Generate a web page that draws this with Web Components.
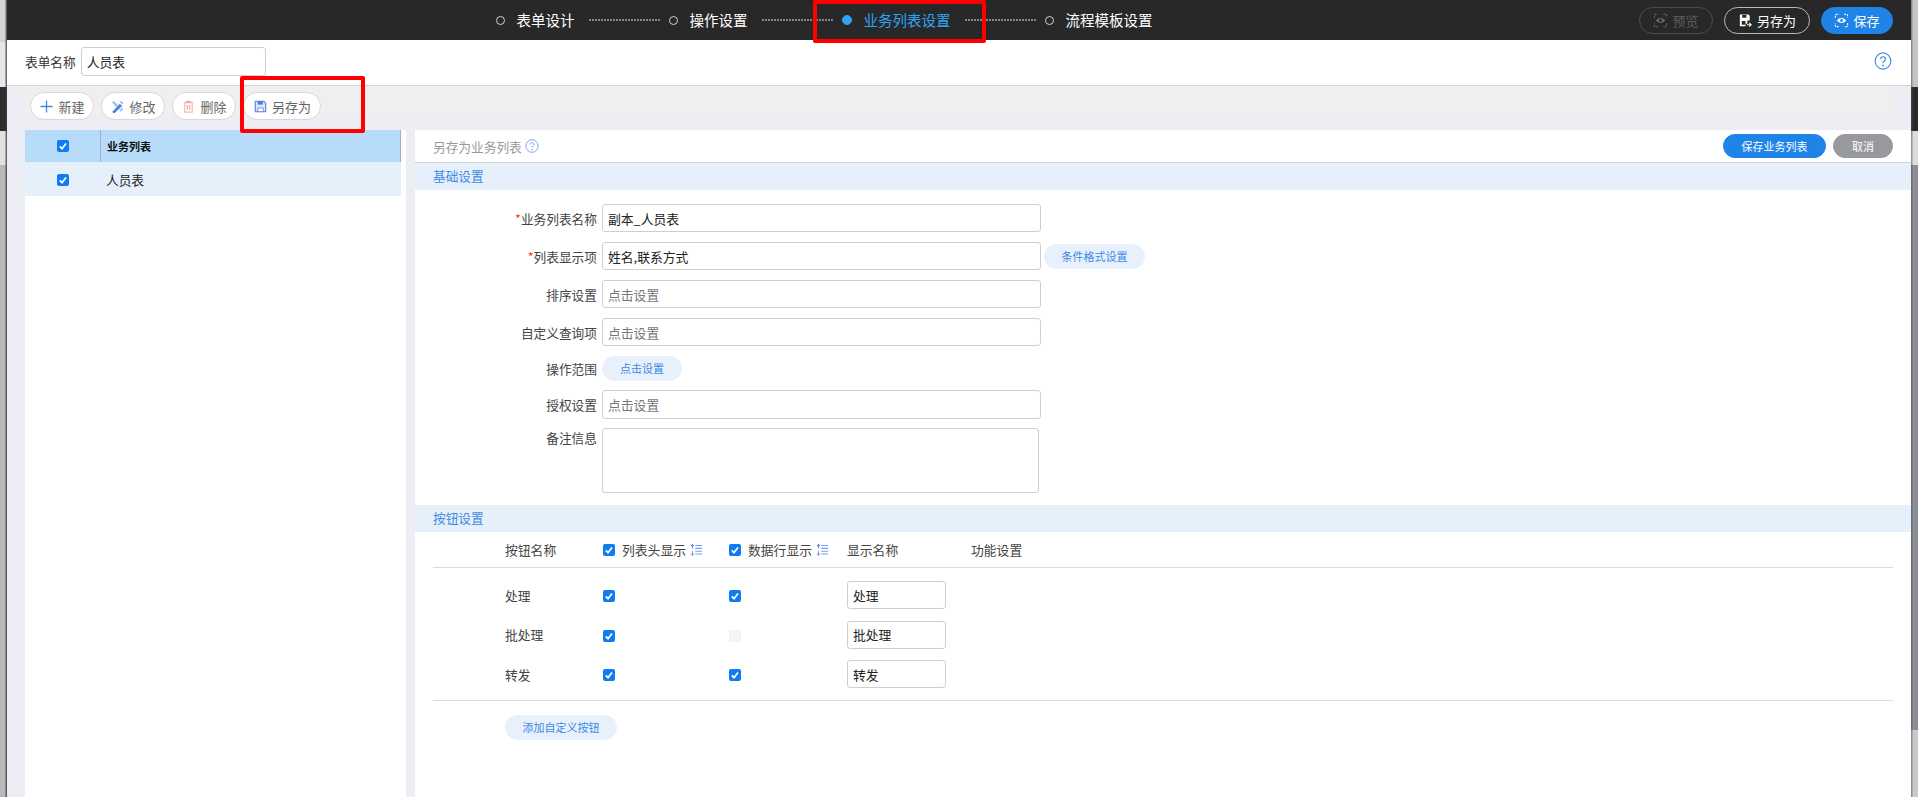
<!DOCTYPE html>
<html lang="zh">
<head>
<meta charset="utf-8">
<title>业务列表设置</title>
<style>
  html, body { margin: 0; height: 100%; overflow: hidden; }
  body { font: 13px "Noto Sans CJK SC", "Liberation Sans", sans-serif; color: #333; }
</style>
</head>
<body>
<app-shell>
  <top-bar></top-bar>
  <form-head></form-head>
  <tool-bar></tool-bar>
  <div slot="body-left"><list-panel></list-panel></div>
  <div slot="body-right"><detail-panel></detail-panel></div>
</app-shell>

<script>
const ICONS = {
  plus: `<path d="M8 1.5v13M1.5 8h13" stroke="#3b8ee8" stroke-width="1.4" fill="none"/>`,
  edit: `<path d="M3 13l7.5-8 2.5 2.5-8 7.5H3z" fill="#3f86e8"/><path d="M2 3.5l2-1.5 5 5-2 2z" fill="#a9bdf0"/><path d="M11.5 2l2.5 2.5-1 1L10.5 3z" fill="#7fa6ee"/><path d="M10 12l3-3 1.5 1.5-3 3z" fill="#a9bdf0"/>`,
  trash: `<path d="M3 4h10M6 4V2.5h4V4" stroke="#f3a0ac" stroke-width="1.2" fill="none"/><path d="M4 4.5v9.5h8V4.5" stroke="#f7b7a6" stroke-width="1.2" fill="none"/><path d="M6.7 6.5v5M9.3 6.5v5" stroke="#f3a0ac" stroke-width="1.2"/>`,
  save: `<path d="M2.5 2.5h9l2 2v9h-11z" stroke="#6f8fe8" stroke-width="1.4" fill="#dfe8fb"/><path d="M5 2.5h5.5v3.5H5z" fill="#3f7fe0"/><path d="M5 9.5h6v4H5z" fill="#fff" stroke="#6f8fe8"/>`,
  saveas: `<path d="M2 1.5h9l1.5 1.5v5H10v3.5H8V14H2z" fill="#fff"/><path d="M4.5 2h4.5v3H4.5z" fill="#282828"/><path d="M4 8.5h4v4H4z" fill="#282828"/><path d="M9.5 12.5h4.5M12 10.5l2 2-2 2" stroke="#fff" stroke-width="1.2" fill="none"/>`,
  eye: `<path d="M1.5 5V2.5a1 1 0 0 1 1-1H5M11 1.5h2.5a1 1 0 0 1 1 1V5M14.500 11v2.500a1 1 0 0 1-1 1H11M5 14.500H2.500a1 1 0 0 1-1-1V11" stroke="currentColor" stroke-width="1.200" fill="none" stroke-dasharray="2 1"/><path d="M3 8c2.500-3.500 7.500-3.500 10 0-2.500 3.500-7.500 3.500-10 0z" fill="currentColor"/><circle cx="8" cy="8" r="1.500" fill="var(--eye, #282828)"/>`,
  help: `<ellipse cx="8" cy="8" rx="7" ry="7.200" stroke="currentColor" fill="none"/><path d="M5.800 6.200C5.800 3.500 10.200 3.500 10.200 6.200c0 1.800-2.200 1.800-2.200 3.800" stroke="currentColor" fill="none"/><circle cx="8" cy="12" r=".8" fill="currentColor"/>`,
  sort: `<path d="M3 1v5M1.300 3L3 1l1.700 2" stroke="#3b82e8" stroke-width="1.200" fill="none"/><path d="M3 9.500v5M1.300 12.500L3 14.500l1.700-2" stroke="#7c7fd8" stroke-width="1.200" fill="none"/><path d="M6.500 2.500H15M6.500 6H15M6.500 9.500H15M6.500 13H15" stroke="#6fa4ee" stroke-width="1.300"/>`
};

class BaseElement extends HTMLElement {
  connectedCallback() {
    if (this.shadowRoot) return;
    this.attachShadow({ mode: "open" });
    this.shadowRoot.innerHTML = `<style>${this.constructor.styles}</style>${this.markup()}`;
  }
}

class UiIcon extends BaseElement {
  static get styles() {
    return /* css */`
      :host { display: inline-flex; flex: none; }
      svg { display: block; width: 100%; height: 100%; }
    `;
  }
  markup() {
    return /* html */`<svg viewBox="0 0 16 16">${ICONS[this.getAttribute("name")]}</svg>`;
  }
}

class AppShell extends BaseElement {
  static get styles() {
    return /* css */`
      :host { display: grid; grid-template-columns: 6.500px 1fr 7px; height: 100vh; position: relative; overflow: hidden; }
      .main { display: flex; flex-direction: column; min-width: 0; background: #edeef3; }
      .strip-left {
        background: linear-gradient(#d6d6d6 0 42px, #e6e6e6 42px 87px, #2e2e2e 87px 131px, #e2e2e2 131px 165px, #b9b9b9 165px);
        box-shadow: inset -1.500px 0 0 0 rgba(60,60,60,.75);
      }
      .strip-right {
        background: linear-gradient(#c4c4c4 0 87px, #2a2a2a 87px 131px, #dcdcdc 131px 165px, #8b8d98 165px 730px, #c9c9c9 730px);
        box-shadow: inset 1.500px 0 0 0 rgba(80,80,80,.5);
      }
      .body { flex: 1; display: flex; gap: 9px; padding-left: 18.500px; min-height: 0; }
      .left { width: 381px; flex: none; display: flex; }
      .right { flex: 1; display: flex; min-width: 0; }
      ::slotted(div) { display: contents; }
    `;
  }
  markup() {
    return /* html */`
      <div class="strip-left"></div>
      <div class="main">
        <slot></slot>
        <div class="body">
          <div class="left"><slot name="body-left"></slot></div>
          <div class="right"><slot name="body-right"></slot></div>
        </div>
      </div>
      <div class="strip-right"></div>
      <mark-box style="left:813px;top:0;width:173px;height:43px"></mark-box>
      <mark-box style="left:240px;top:76px;width:125px;height:57px"></mark-box>
    `;
  }
}

class MarkBox extends BaseElement {
  static get styles() {
    return /* css */`
      :host { position: absolute; box-sizing: border-box; border: 4px solid #f00; border-radius: 2px; pointer-events: none; }
    `;
  }
  markup() { return ""; }
}

class FlowStep extends BaseElement {
  static get styles() {
    return /* css */`
      :host { display: flex; align-items: center; font-size: 14.500px; line-height: 20px; color: #fff; }
      .dot { width: 9px; height: 9px; border: 1.200px solid #d0d0d0; border-radius: 50%; box-sizing: border-box; margin-right: 12px; flex: none; }
      :host([active]) { color: #2fa4f5; }
      :host([active]) .dot { background: #2fa4f5; border-color: #2fa4f5; width: 10px; height: 10px; margin-right: 12px; }
      .dash { width: 72px; height: 2px; margin: 0 8px 0 14px; background: repeating-linear-gradient(90deg, #858585 0 2px, transparent 2px 3px); }
      :host([last]) .dash { display: none; }
      .label { white-space: nowrap; }
    `;
  }
  markup() {
    return /* html */`<span class="dot"></span><span class="label"><slot></slot></span><span class="dash"></span>`;
  }
}

class PillButton extends BaseElement {
  static get styles() {
    return /* css */`
      :host {
        display: inline-flex; align-items: center; justify-content: center; gap: 4px; box-sizing: border-box; flex: none;
        height: var(--h, 28px); border-radius: 15px; font-size: var(--fs, 13px); white-space: nowrap; line-height: 1;
        color: #666; background: #fff; border: 1px solid #d8d8d8;
      }
      :host([kind="primary"]) { background: #1e84e8; border-color: #1e84e8; color: #fff; }
      :host([kind="gray"]) { background: #98999e; border-color: #98999e; color: #fff; }
      :host([kind="soft"]) { background: #e8f1fb; border-color: #e8f1fb; color: #3d8ae6; }
      :host([kind="outline"]) { background: transparent; border-color: #b9b9b9; color: #fff; }
      :host([kind="ghost"]) { background: transparent; border-color: #4c4c4c; color: #5c5c5c; }
    `;
  }
  markup() {
    return /* html */`<slot name="icon"></slot><slot></slot>`;
  }
}

class TopBar extends BaseElement {
  static get styles() {
    return /* css */`
      :host { display: flex; align-items: center; height: 40px; flex: none; background: #282828; padding: 0 18px 0 489px; }
      .actions { margin-left: auto; display: flex; gap: 11px; --h: 27px; }
      ui-icon { width: 15px; height: 15px; }
      .p { width: 74px; } .s { width: 86px; } .k { width: 72px; }
      .p ui-icon { color: #666; } .k ui-icon { color: #fff; --eye: #1e84e8; }
    `;
  }
  markup() {
    return /* html */`
      <flow-step>表单设计</flow-step>
      <flow-step>操作设置</flow-step>
      <flow-step active>业务列表设置</flow-step>
      <flow-step last>流程模板设置</flow-step>
      <div class="actions">
        <pill-button class="p" kind="ghost"><ui-icon slot="icon" name="eye"></ui-icon>预览</pill-button>
        <pill-button class="s" kind="outline"><ui-icon slot="icon" name="saveas"></ui-icon>另存为</pill-button>
        <pill-button class="k" kind="primary"><ui-icon slot="icon" name="eye"></ui-icon>保存</pill-button>
      </div>
    `;
  }
}

class TextField extends BaseElement {
  static get styles() {
    return /* css */`
      :host {
        display: flex; align-items: center; box-sizing: border-box; height: var(--fh, 28px); width: var(--fw, 439px); flex: none;
        padding: 0 5px; background: #fff; border: 1px solid #cfcfcf; border-radius: 3px; font-size: 12.800px; color: #222;
      }
      :host([placeholder]) { color: #777; }
    `;
  }
  markup() { return /* html */`<slot></slot>`; }
}

class FormHead extends BaseElement {
  static get styles() {
    return /* css */`
      :host { display: flex; align-items: center; gap: 5px; height: 46px; box-sizing: border-box; flex: none; padding: 0 19px 3px 18.500px; background: #fff; border-bottom: 1px solid #d4d4d4; font-size: 12.700px; }
      text-field { --fw: 185px; --fh: 29px; }
      ui-icon { width: 18px; height: 18px; margin-left: auto; color: #3f86e8; }
    `;
  }
  markup() {
    return /* html */`<span>表单名称</span><text-field>人员表</text-field><ui-icon name="help"></ui-icon>`;
  }
}

class ToolBar extends BaseElement {
  static get styles() {
    return /* css */`
      :host {
        display: flex; gap: 7px; height: 44px; box-sizing: border-box; flex: none; margin: 0 18px 0 18.500px; padding: 6px 0 0 5px;
        background: linear-gradient(#efefef 31px, transparent 31px);
      }
      ui-icon { width: 15px; height: 15px; }
      .w { width: 64px; } .l { width: 78px; }
    `;
  }
  markup() {
    return /* html */`
      <pill-button class="w"><ui-icon slot="icon" name="plus"></ui-icon>新建</pill-button>
      <pill-button class="w"><ui-icon slot="icon" name="edit"></ui-icon>修改</pill-button>
      <pill-button class="w"><ui-icon slot="icon" name="trash"></ui-icon>删除</pill-button>
      <pill-button class="l"><ui-icon slot="icon" name="save"></ui-icon>另存为</pill-button>
    `;
  }
}

class CheckMark extends BaseElement {
  static get styles() {
    return /* css */`
      :host { display: inline-block; width: 12px; height: 12px; flex: none; border-radius: 2px; background: #0f7cf2; position: relative; top: 1px; }
      :host([off]) { background: #f6f6f6; outline: 1px solid #f0f0f0; outline-offset: -1px; }
      :host([off]) svg { display: none; }
      svg { display: block; width: 12px; height: 12px; }
    `;
  }
  markup() {
    return /* html */`<svg viewBox="0 0 12 12"><path d="M2.800 6.300l2.200 2.400 4-5.200" stroke="#fff" stroke-width="1.800" fill="none"/></svg>`;
  }
}

class ListPanel extends BaseElement {
  static get styles() {
    return /* css */`
      :host { display: block; flex: 1; background: #fff; }
      .row { display: grid; grid-template-columns: 75px 1fr; width: 376px; align-items: center; }
      .head { height: 32px; background: #b6dcf9 ; font-size: 11px; font-weight: 700; color: #111; }
      .item { height: 34px; background: #e6f0fb; color: #222; font-size: 12.700px; }
      .c { display: flex; justify-content: center; padding-left: 1px; }
      .t { height: 100%; display: flex; align-items: center; padding-left: 6px; }
      .head .t { border-left: 1px solid #a7a7d0; border-right: 1px solid #a7a7d0; }
      .head check-mark { top: 0; }
    `;
  }
  markup() {
    return /* html */`
      <div class="row head"><span class="c"><check-mark></check-mark></span><span class="t">业务列表</span></div>
      <div class="row item"><span class="c"><check-mark></check-mark></span><span class="t">人员表</span></div>
    `;
  }
}

class SectionBar extends BaseElement {
  static get styles() {
    return /* css */`
      :host { display: flex; align-items: center; height: 27px; box-sizing: border-box; padding: 0 0 2px 18px; background: #e6f0fb; color: #3d8ae6; flex: none; font-size: 12.700px; }
    `;
  }
  markup() { return /* html */`<slot></slot>`; }
}

class FormRow extends BaseElement {
  static get styles() {
    return /* css */`
      :host { display: flex; align-items: center; gap: 5px; height: var(--rh, 28px); margin-bottom: var(--rm, 10px); font-size: 12.700px; }
      .label { width: 182px; flex: none; text-align: right; white-space: nowrap; color: #444; }
      .label i { color: #f33; font-style: normal; }
      .ctl { display: flex; align-items: center; gap: 3px; }
      :host([top]) { align-items: flex-start; }
    `;
  }
  markup() {
    const star = this.hasAttribute("required") ? "<i>*</i>" : "";
    return /* html */`<span class="label">${star}${this.getAttribute("label")}</span><span class="ctl"><slot></slot></span>`;
  }
}

class ButtonGrid extends BaseElement {
  static get styles() {
    return /* css */`
      :host { display: block; margin: 0 18px; font-size: 12.800px; }
      .row { display: grid; grid-template-columns: 98px 126px 118px 124px 1fr; padding-left: 72px; align-items: center; }
      .head { height: 35px; border-bottom: 1px solid #dcdcdc; color: #444; }
      .head check-mark { top: 0; }
      .cell { display: flex; align-items: center; gap: 7px; }
      .cell ui-icon { width: 13px; height: 14px; margin-left: -3px; }
      .body { padding: 13px 0 12px; border-bottom: 1px solid #dcdcdc; display: grid; gap: 11.500px; }
      .body .row { height: 28px; color: #444; }
      text-field { --fw: 99px; }
      .add { display: flex; padding: 14px 0 0 72px; }
      pill-button { width: 112px; --h: 25px; --fs: 11px; }
    `;
  }
  markup() {
    const row = (name, off) => /* html */`
      <div class="row"><span>${name}</span><span class="cell"><check-mark></check-mark></span>
      <span class="cell"><check-mark ${off ? "off" : ""}></check-mark></span><text-field>${name}</text-field></div>`;
    return /* html */`
      <div class="row head">
        <span>按钮名称</span>
        <span class="cell"><check-mark></check-mark>列表头显示<ui-icon name="sort"></ui-icon></span>
        <span class="cell"><check-mark></check-mark>数据行显示<ui-icon name="sort"></ui-icon></span>
        <span>显示名称</span>
        <span>功能设置</span>
      </div>
      <div class="body">${row("处理")}${row("批处理", true)}${row("转发")}</div>
      <div class="add"><pill-button kind="soft">添加自定义按钮</pill-button></div>
    `;
  }
}

class DetailPanel extends BaseElement {
  static get styles() {
    return /* css */`
      :host { display: block; flex: 1; background: #fff; min-width: 0; }
      .title { display: flex; align-items: center; height: 33px; box-sizing: border-box; padding: 0 18px; border-bottom: 1px solid #d4d4d4; color: #999; gap: 3px; font-size: 12.700px; }
      .title ui-icon { width: 14px; height: 14px; color: #6f97e8; }
      .btns { margin-left: auto; display: flex; gap: 7px; --h: 24px; --fs: 11px; }
      .btns .a { width: 103px; } .btns .b { width: 60px; }
      .form { padding: 14px 0 12px; }
      .soft { --h: 25px; --fs: 11px; }
      .opt { --rh: 24px; }
      .auth { --rm: 9px; --rh: 29px; }
      .note { --rm: 0; --rh: 65px; }
      .note text-field { --fw: 437px; --fh: 65px; }
      .auth text-field { --fh: 29px; }
    `;
  }
  markup() {
    return /* html */`
      <div class="title">
        <span>另存为业务列表</span><ui-icon name="help"></ui-icon>
        <div class="btns">
          <pill-button class="a" kind="primary">保存业务列表</pill-button>
          <pill-button class="b" kind="gray">取消</pill-button>
        </div>
      </div>
      <section-bar>基础设置</section-bar>
      <div class="form">
        <form-row label="业务列表名称" required><text-field>副本_人员表</text-field></form-row>
        <form-row label="列表显示项" required><text-field>姓名,联系方式</text-field><pill-button class="soft" kind="soft" style="width:101px">条件格式设置</pill-button></form-row>
        <form-row label="排序设置"><text-field placeholder>点击设置</text-field></form-row>
        <form-row label="自定义查询项"><text-field placeholder>点击设置</text-field></form-row>
        <form-row class="opt" label="操作范围"><pill-button class="soft" kind="soft" style="width:80px">点击设置</pill-button></form-row>
        <form-row class="auth" label="授权设置"><text-field placeholder>点击设置</text-field></form-row>
        <form-row class="note" label="备注信息" top><text-field></text-field></form-row>
      </div>
      <section-bar>按钮设置</section-bar>
      <button-grid></button-grid>
    `;
  }
}

customElements.define("ui-icon", UiIcon);
customElements.define("mark-box", MarkBox);
customElements.define("flow-step", FlowStep);
customElements.define("pill-button", PillButton);
customElements.define("text-field", TextField);
customElements.define("check-mark", CheckMark);
customElements.define("section-bar", SectionBar);
customElements.define("form-row", FormRow);
customElements.define("button-grid", ButtonGrid);
customElements.define("top-bar", TopBar);
customElements.define("form-head", FormHead);
customElements.define("tool-bar", ToolBar);
customElements.define("list-panel", ListPanel);
customElements.define("detail-panel", DetailPanel);
customElements.define("app-shell", AppShell);
</script>
</body>
</html>
